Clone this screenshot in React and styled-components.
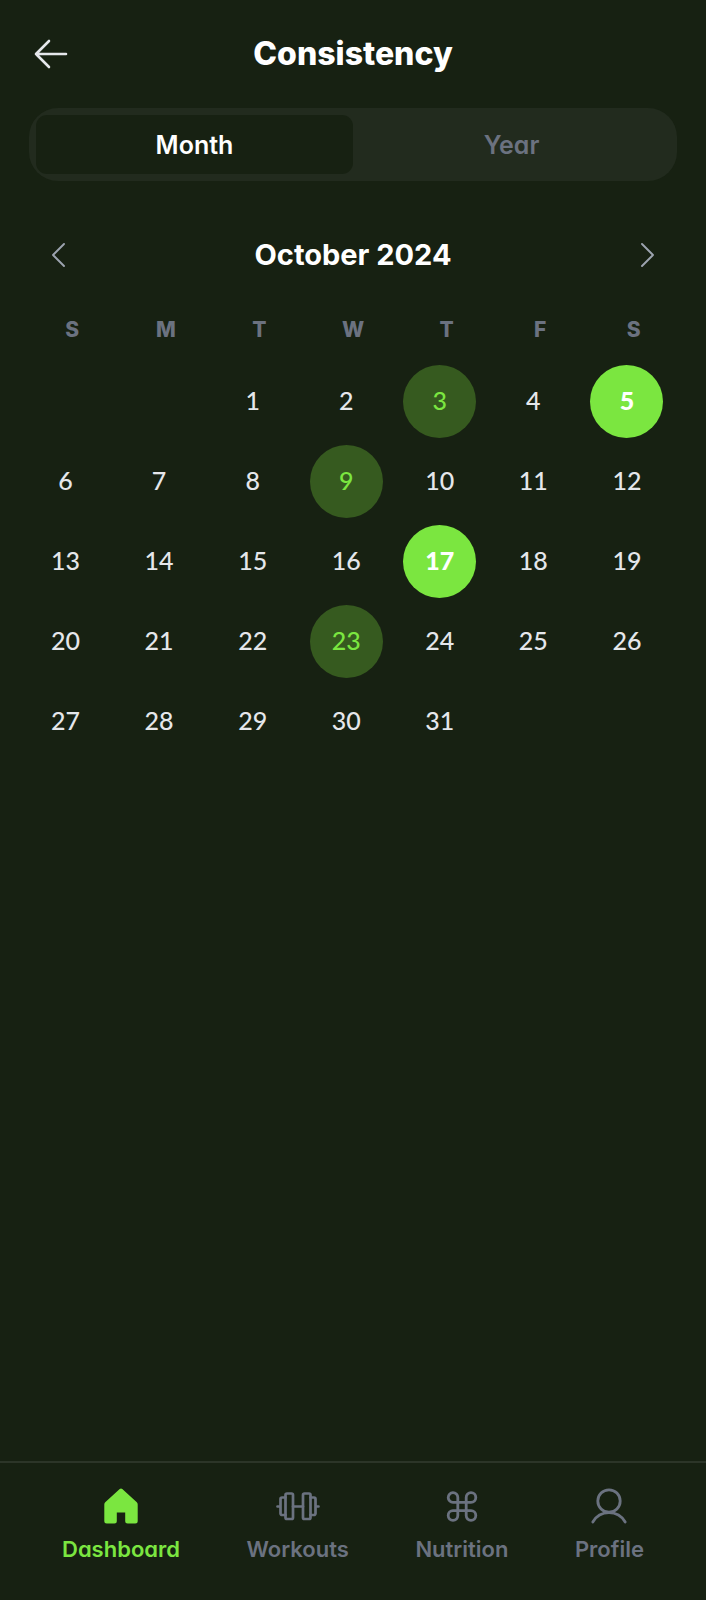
import React, { useState } from 'react';
import styled, { createGlobalStyle, css } from 'styled-components';

const c = {
  bg: '#172112',
  panel: '#222b1e',
  line: '#2c3528',
  green: '#7be640',
  greenDim: '#365a1f',
  grey: '#6b7280',
  greyLight: '#9ca3af',
  text: '#e5e7eb',
  white: '#ffffff',
};

const GlobalStyle = createGlobalStyle`
  *, *::before, *::after { box-sizing: border-box; }
  body {
    margin: 0;
    background: ${c.bg};
    color: ${c.white};
    font-family: Inter, "Open Sans", sans-serif;
    font-feature-settings: "cv11";
  }
  button {
    margin: 0;
    padding: 0;
    border: 0;
    background: none;
    color: inherit;
    font: inherit;
    font-feature-settings: inherit;
    cursor: pointer;
  }
  svg { display: block; }
`;

const Screen = styled.div`
  display: flex;
  flex-direction: column;
  min-height: 100vh;
`;

const Header = styled.header`
  display: grid;
  grid-template-columns: 44px 1fr 44px;
  align-items: center;
  height: 108px;
  padding: 0 29px;
`;

const Title = styled.h1`
  margin: 0;
  font-size: 32px;
  font-weight: 800;
  line-height: 40px;
  text-align: center;
`;

const IconButton = styled.button`
  display: grid;
  place-items: center;
  width: 44px;
  height: 44px;
  color: ${(p) => (p.$muted ? c.greyLight : c.text)};
`;

const Main = styled.main`
  flex: 1;
  padding: 0 29px;
`;

const Tabs = styled.div`
  display: grid;
  grid-template-columns: 1fr 1fr;
  padding: 7px;
  border-radius: 29px;
  background: ${c.panel};
`;

const Tab = styled.button`
  height: 59px;
  border-radius: 11px;
  font-size: 25px;
  font-weight: 600;
  background: ${(p) => (p.$active ? c.bg : 'transparent')};
  color: ${(p) => (p.$active ? c.white : c.grey)};
`;

const MonthBar = styled.div`
  display: flex;
  align-items: center;
  justify-content: space-between;
  height: 44px;
  margin-top: 52px;
  padding: 0 8px;
`;

const MonthName = styled.h2`
  margin: 0;
  font-size: 29px;
  font-weight: 700;
  line-height: 36px;
`;

const Calendar = styled.table`
  display: block;
  margin-top: 39px;
`;

const Head = styled.thead`
  display: block;
`;

const Body = styled.tbody`
  display: grid;
  gap: 7px;
  margin-top: 21px;
`;

const Week = styled.tr`
  display: grid;
  grid-template-columns: repeat(7, 1fr);
  column-gap: 7px;
`;

const Weekday = styled.th`
  padding: 0;
  color: ${c.grey};
  font-size: 21px;
  font-weight: 800;
  line-height: 28px;
  text-align: center;
`;

const DayCell = styled.td`
  height: 73px;
  padding: 0;
`;

const tones = {
  plain: css`
    color: ${c.text};
  `,
  dim: css`
    background: ${c.greenDim};
    color: ${c.green};
  `,
  full: css`
    background: ${c.green};
    color: ${c.white};
    font-weight: 900;
  `,
};

const Day = styled.button`
  width: 73px;
  height: 73px;
  padding-bottom: 3px;
  border-radius: 50%;
  font-family: Lato, "Open Sans", sans-serif;
  font-size: 25px;
  font-weight: 500;
  ${(p) => tones[p.$tone]}
`;

const BottomNav = styled.nav`
  display: flex;
  justify-content: space-between;
  height: 139px;
  padding: 21px 62px 0;
  border-top: 2px solid ${c.line};
`;

const NavLink = styled.a`
  display: flex;
  flex-direction: column;
  align-items: center;
  gap: 1px;
  color: ${(p) => (p.$active ? c.green : c.grey)};
  font-size: 22px;
  font-weight: 600;
  line-height: 40px;
  text-decoration: none;
`;

const BackIcon = () => (
  <svg width="34" height="30" viewBox="0 0 34 30" fill="none" stroke="currentColor" strokeWidth="2.6" strokeLinecap="round" strokeLinejoin="round">
    <path d="M32 15H2M15 2 2 15l13 13" />
  </svg>
);

const Chevron = ({ d }) => (
  <svg width="14" height="24" viewBox="0 0 14 24" fill="none" stroke="currentColor" strokeWidth="1.9" strokeLinecap="round" strokeLinejoin="round">
    <path d={d} />
  </svg>
);

const HomeIcon = () => (
  <svg width="44" height="44" viewBox="0 0 44 44" fill="currentColor">
    <path d="M20.700 5a2 2 0 0 1 2.600 0L37.800 18.300q.900.900.900 2.100v16.600a2.500 2.500 0 0 1-2.500 2.500h-7.500a2.500 2.500 0 0 1-2.500-2.500v-8.500h-8.400v8.500a2.500 2.500 0 0 1-2.500 2.500H7.800a2.500 2.500 0 0 1-2.500-2.500V20.400q0-1.200.900-2.100Z" />
  </svg>
);

const DumbbellIcon = () => (
  <svg width="44" height="44" viewBox="0 0 44 44" fill="none" stroke="currentColor" strokeWidth="2.7" strokeLinecap="round" strokeLinejoin="round">
    <rect x="9.500" y="9.500" width="7.500" height="25.500" rx="1.500" />
    <rect x="27" y="9.500" width="7.500" height="25.500" rx="1.500" />
    <path d="M17 22.500h10M9.500 13.500H6A1.500 1.500 0 0 0 4.500 15v14.500A1.500 1.500 0 0 0 6 31h3.500M34.500 13.500H38a1.500 1.500 0 0 1 1.500 1.500v14.500A1.500 1.500 0 0 1 38 31h-3.500M4.500 22.500h-3M39.500 22.500h3" />
  </svg>
);

const CommandIcon = () => (
  <svg width="44" height="44" viewBox="0 0 44 44" fill="none" stroke="currentColor" strokeWidth="2.8">
    <path d="M17.800 18.300h8.400v8.400h-8.400zM17.800 18.300h-4.600a4.800 4.800 0 1 1 4.600-4.800zM26.200 18.300v-4.800a4.800 4.800 0 1 1 4.800 4.800zM17.800 26.700v4.800a4.800 4.800 0 1 1-4.800-4.800zM26.200 26.700H31a4.800 4.800 0 1 1-4.800 4.800z" />
  </svg>
);

const ProfileIcon = () => (
  <svg width="44" height="44" viewBox="0 0 44 44" fill="none" stroke="currentColor" strokeWidth="2.800" strokeLinecap="round">
    <circle cx="22" cy="17" r="11.200" />
    <path d="M5.800 38a18.700 18.700 0 0 1 32.400 0" />
  </svg>
);

const WEEKDAYS = [
  ['S', 'Sunday'],
  ['M', 'Monday'],
  ['T', 'Tuesday'],
  ['W', 'Wednesday'],
  ['T', 'Thursday'],
  ['F', 'Friday'],
  ['S', 'Saturday'],
];

const FIRST_WEEKDAY = 2;
const WEEKS = Array.from({ length: 5 }, (_, w) =>
  Array.from({ length: 7 }, (_, d) => {
    const n = w * 7 + d - FIRST_WEEKDAY + 1;
    return n >= 1 && n <= 31 ? n : null;
  })
);

const TONES = { 3: 'dim', 5: 'full', 9: 'dim', 17: 'full', 23: 'dim' };

const NAV = [
  ['Dashboard', HomeIcon],
  ['Workouts', DumbbellIcon],
  ['Nutrition', CommandIcon],
  ['Profile', ProfileIcon],
];

export default function App() {
  const [view, setView] = useState('Month');

  return (
    <Screen>
      <GlobalStyle />
      <Header>
        <IconButton aria-label="Back">
          <BackIcon />
        </IconButton>
        <Title>Consistency</Title>
      </Header>
      <Main>
        <Tabs role="tablist">
          {['Month', 'Year'].map((name) => (
            <Tab
              key={name}
              role="tab"
              aria-selected={view === name}
              $active={view === name}
              onClick={() => setView(name)}
            >
              {name}
            </Tab>
          ))}
        </Tabs>
        <MonthBar>
          <IconButton $muted aria-label="Previous month">
            <Chevron d="M12 1 1 12l11 11" />
          </IconButton>
          <MonthName>October 2024</MonthName>
          <IconButton $muted aria-label="Next month">
            <Chevron d="m2 1 11 11L2 23" />
          </IconButton>
        </MonthBar>
        <Calendar>
          <Head>
            <Week>
              {WEEKDAYS.map(([letter, name]) => (
                <Weekday key={name} scope="col" abbr={name}>
                  {letter}
                </Weekday>
              ))}
            </Week>
          </Head>
          <Body>
            {WEEKS.map((week, w) => (
              <Week key={w}>
                {week.map((n, d) => (
                  <DayCell key={d}>
                    {n && <Day $tone={TONES[n] || 'plain'}>{n}</Day>}
                  </DayCell>
                ))}
              </Week>
            ))}
          </Body>
        </Calendar>
      </Main>
      <BottomNav>
        {NAV.map(([label, Icon], i) => (
          <NavLink key={label} href={`#${label.toLowerCase()}`} $active={i === 0}>
            <Icon />
            {label}
          </NavLink>
        ))}
      </BottomNav>
    </Screen>
  );
}
